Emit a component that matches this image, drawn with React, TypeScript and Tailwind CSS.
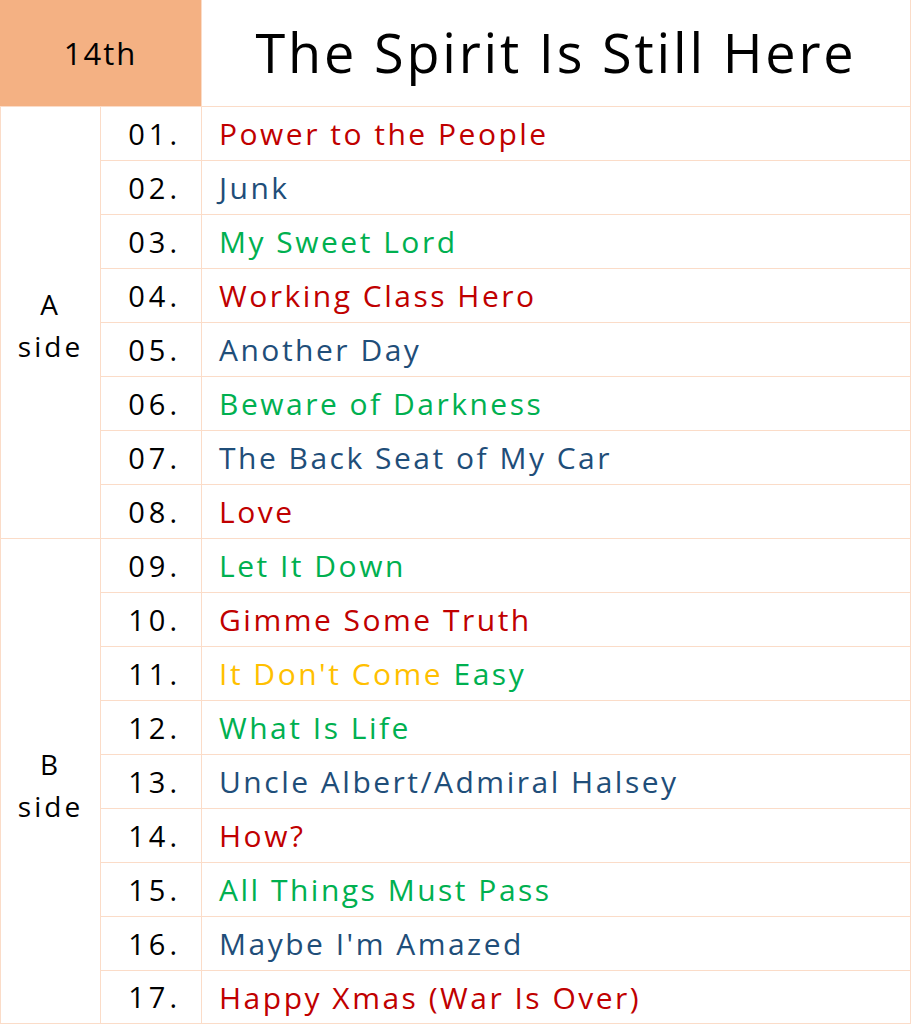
import React from "react";

const R = "#c00000";
const B = "#1f4e79";
const G = "#00b050";
const Y = "#ffc000";

type Seg = { t: string; c: string };
const songs: Seg[][] = [
  [{ t: "Power to the People", c: R }],
  [{ t: "Junk", c: B }],
  [{ t: "My Sweet Lord", c: G }],
  [{ t: "Working Class Hero", c: R }],
  [{ t: "Another Day", c: B }],
  [{ t: "Beware of Darkness", c: G }],
  [{ t: "The Back Seat of My Car", c: B }],
  [{ t: "Love", c: R }],
  [{ t: "Let It Down", c: G }],
  [{ t: "Gimme Some Truth", c: R }],
  [{ t: "It Don't Come ", c: Y }, { t: "Easy", c: G }],
  [{ t: "What Is Life", c: G }],
  [{ t: "Uncle Albert/Admiral Halsey", c: B }],
  [{ t: "How?", c: R }],
  [{ t: "All Things Must Pass", c: G }],
  [{ t: "Maybe I'm Amazed", c: B }],
  [{ t: "Happy Xmas (War Is Over)", c: R }],
];

const bc = "border-[#fbdcc8]";

export default function App() {
  return (
    <div
      className="w-[911px] h-[1024px] bg-white overflow-hidden"
      style={{ fontFamily: "'Open Sans', 'Noto Sans', sans-serif" }}
    >
      <div className="grid grid-cols-[101px_101px_1fr] grid-rows-[107px_repeat(16,54px)_53px]">
        <div className={`col-span-2 bg-[#f4b183] border-r border-b ${bc} flex items-center justify-center text-[31px] text-black tracking-[2px]`}>
          14th
        </div>
        <div className={`border-r border-b ${bc} flex items-center justify-center text-[54px] text-black tracking-[2.8px] pb-[2px]`}>
          The Spirit Is Still Here
        </div>
        {songs.map((segs, i) => (
          <React.Fragment key={i}>
            {i === 0 && (
              <div className={`row-span-8 border-l border-r border-b ${bc} flex flex-col items-center justify-center text-[28px] leading-[42px] text-black tracking-[3px] pt-[4px]`}>
                <span>A</span>
                <span>side</span>
              </div>
            )}
            {i === 8 && (
              <div className={`row-span-9 border-l border-r border-b ${bc} flex flex-col items-center justify-center text-[28px] leading-[42px] text-black tracking-[3px] pt-[8px]`}>
                <span>B</span>
                <span>side</span>
              </div>
            )}
            <div className={`border-r border-b ${bc} flex items-center justify-end pr-[20px] text-[29px] text-black tracking-[4px]`}>
              {String(i + 1).padStart(2, "0")}.
            </div>
            <div className={`border-r border-b ${bc} flex items-center pl-[17px] text-[30px] font-medium tracking-[2.5px]`}>
              {segs.map((s, j) => (
                <span key={j} style={{ color: s.c }} className="whitespace-pre">
                  {s.t}
                </span>
              ))}
            </div>
          </React.Fragment>
        ))}
      </div>
    </div>
  );
}
